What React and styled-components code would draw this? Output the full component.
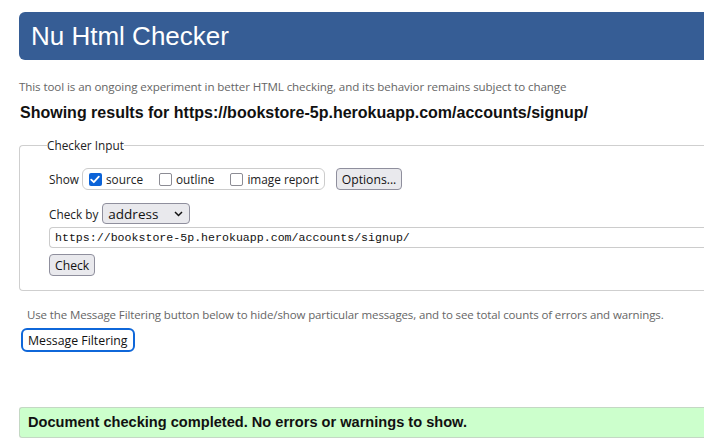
import React from "react";
import styled, { createGlobalStyle } from "styled-components";

const GlobalStyle = createGlobalStyle`
  html, body {
    margin: 0;
    background: #fff;
    font-family: "Open Sans", "Noto Sans", sans-serif;
    overflow: hidden;
  }
`;

const Page = styled.div`
  width: 704px;
  height: 448px;
  padding-left: 19px;
  box-sizing: border-box;
  overflow: hidden;
`;

const Header = styled.h1`
  margin: 12px 0 0;
  width: 720px;
  height: 48px;
  padding-left: 12px;
  box-sizing: border-box;
  background: #365d95;
  border-radius: 6px 0 0 6px;
  color: #fff;
  font: 400 26px/48px "Liberation Sans", Arial, sans-serif;
`;

const Intro = styled.p`
  margin: 20px 0 0;
  font-size: 11.6px;
  line-height: 14px;
  color: #666;
  white-space: nowrap;
  letter-spacing: -0.1px;
`;

const Results = styled.h2`
  margin: 9px 0 0 1px;
  font: 700 16px/20px "Liberation Sans", Arial, sans-serif;
  color: #111;
  white-space: nowrap;
`;

const Fieldset = styled.fieldset`
  margin: 14px 0 0;
  width: 720px;
  box-sizing: border-box;
  border: 1px solid #cfcfcf;
  border-right: none;
  border-radius: 4px 0 0 4px;
  padding: 10px 0 14px 29px;
`;

const Legend = styled.legend`
  margin-left: -2px;
  padding: 0;
  font-size: 11.8px;
  color: #222;
`;

const Row = styled.div`
  display: flex;
  align-items: center;
  gap: ${(p) => p.$gap || 4}px;
  margin-top: ${(p) => p.$top || 0}px;
  font-size: 11.8px;
  color: #222;
`;

const Group = styled.span`
  display: inline-flex;
  align-items: center;
  gap: 16px;
  height: 20px;
  padding: 0 5px 0 6px;
  border: 1px solid #ccc;
  border-radius: 6px;
`;

const Choice = styled.label`
  display: inline-flex;
  align-items: center;
  gap: 4px;
`;

const Box = styled.span`
  width: 13px;
  height: 13px;
  box-sizing: border-box;
  border-radius: 2px;
  border: ${(p) => (p.$on ? "none" : "1.5px solid #8c8c94")};
  background: ${(p) => (p.$on ? "#0b63d8" : "#fff")};
  display: inline-flex;
  align-items: center;
  justify-content: center;
`;

const Button = styled.button`
  font: 400 12.2px "Open Sans", "Noto Sans", sans-serif;
  color: #111;
  background: #e9e9ed;
  border: 1px solid #8f8f9d;
  border-radius: 4px;
  height: 22px;
  padding: 0 5px;
  margin-left: ${(p) => p.$ml || 0}px;
`;

const Select = styled.span`
  display: inline-flex;
  align-items: center;
  justify-content: space-between;
  width: 88px;
  height: 21px;
  box-sizing: border-box;
  padding: 0 6px 0 5px;
  background: #e9e9ed;
  border: 1px solid #8f8f9d;
  border-radius: 4px;
  font-size: 13.5px;
  color: #111;
`;

const UrlInput = styled.div`
  margin-top: 3px;
  height: 21px;
  box-sizing: border-box;
  border: 1px solid #ccc;
  border-right: none;
  border-radius: 4px 0 0 4px;
  padding-left: 5px;
  font: 11.6px/19px "Liberation Mono", monospace;
  color: #111;
  white-space: nowrap;
`;

const Note = styled.p`
  margin: 16px 0 0 8px;
  font-size: 11.5px;
  color: #666;
  white-space: nowrap;
  letter-spacing: -0.12px;
`;

const FilterButton = styled.button`
  margin: 6px 0 0 2px;
  height: 24px;
  padding: 0 5px;
  border: 2px solid #0f67d9;
  border-radius: 6px;
  background: #fff;
  font: 400 12.3px "Open Sans", "Noto Sans", sans-serif;
  color: #111;
`;

const Success = styled.div`
  margin-top: 55px;
  width: 720px;
  height: 31px;
  box-sizing: border-box;
  background: #ccffcc;
  border: 1px solid #c4d8c4;
  border-right: none;
  border-radius: 3px 0 0 3px;
  padding-left: 8px;
  font: 700 14.6px/29px "Liberation Sans", Arial, sans-serif;
  color: #111;
`;

const Check = () => (
  <svg width="10" height="9" viewBox="0 0 10 9">
    <path d="M1.2 4.6 L3.8 7.2 L8.8 1.6" fill="none" stroke="#fff" strokeWidth="1.8" strokeLinecap="round" strokeLinejoin="round" />
  </svg>
);

const Chevron = () => (
  <svg width="9" height="6" viewBox="0 0 9 6">
    <path d="M1 1 L4.5 4.5 L8 1" fill="none" stroke="#111" strokeWidth="1.5" />
  </svg>
);

export default function App() {
  return (
    <Page>
      <GlobalStyle />
      <Header>Nu Html Checker</Header>
      <Intro>
        This tool is an ongoing experiment in better HTML checking, and its behavior remains subject to change
      </Intro>
      <Results>Showing results for https://bookstore-5p.herokuapp.com/accounts/signup/</Results>
      <Fieldset>
        <Legend>Checker Input</Legend>
        <Row $gap={3} $top={5}>
          Show
          <Group>
            <Choice>
              <Box $on>
                <Check />
              </Box>
              source
            </Choice>
            <Choice>
              <Box />
              outline
            </Choice>
            <Choice>
              <Box />
              image report
            </Choice>
          </Group>
          <Button $ml={8}>Options...</Button>
        </Row>
        <Row $top={13}>
          Check by
          <Select>
            address
            <Chevron />
          </Select>
        </Row>
        <UrlInput>https://bookstore-5p.herokuapp.com/accounts/signup/</UrlInput>
        <Row $top={6}>
          <Button>Check</Button>
        </Row>
      </Fieldset>
      <Note>
        Use the Message Filtering button below to hide/show particular messages, and to see total counts of errors and warnings.
      </Note>
      <FilterButton>Message Filtering</FilterButton>
      <Success>Document checking completed. No errors or warnings to show.</Success>
    </Page>
  );
}
